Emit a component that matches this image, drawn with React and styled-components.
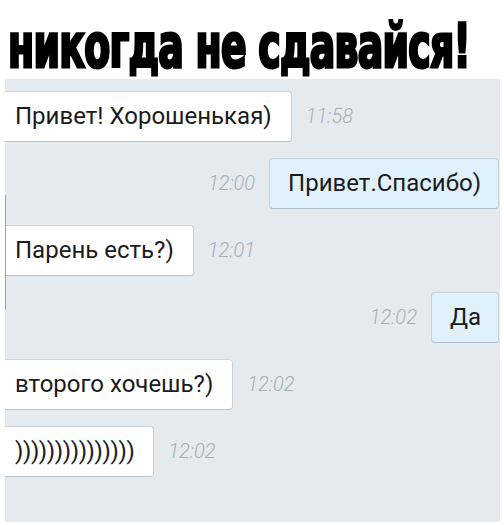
import React from "react";
import styled, { createGlobalStyle } from "styled-components";

const GlobalStyle = createGlobalStyle`
  html, body {
    margin: 0;
    padding: 0;
    background: #ffffff;
  }
  body {
    width: 504px;
    height: 525px;
    overflow: hidden;
  }
`;

const Page = styled.div`
  width: 504px;
  height: 525px;
  display: flex;
  flex-direction: column;
  background: #ffffff;
`;

const Header = styled.div`
  height: 79px;
  display: flex;
  align-items: flex-end;
  padding-left: 8px;
  box-sizing: border-box;
`;

const Title = styled.h1`
  margin: 0 0 3px 0;
  font-family: "DejaVu Sans", sans-serif;
  font-stretch: condensed;
  font-weight: 700;
  font-size: 60px;
  line-height: 60px;
  letter-spacing: -1px;
  color: #000;
  -webkit-text-stroke: 3px #000;
  transform: scaleX(0.7);
  transform-origin: left bottom;
  white-space: nowrap;
`;

const Chat = styled.div`
  position: relative;
  margin: 0 4px 3px 5px;
  flex: 1;
  background: #e4eaee;
  overflow: hidden;
  display: flex;
  flex-direction: column;
  gap: 16px;
  padding-top: 12px;
`;

const ScrollMark = styled.div`
  position: absolute;
  left: 0;
  top: 116px;
  width: 1px;
  height: 115px;
  background: #9aa1a8;
`;

const Row = styled.div`
  display: flex;
  align-items: center;
  gap: 14px;
  justify-content: ${(p) => (p.$out ? "flex-end" : "flex-start")};
  margin: ${(p) => (p.$out ? "0 1px 0 0" : "0 0 0 -6px")};
`;

const Bubble = styled.div`
  height: 51px;
  box-sizing: border-box;
  display: flex;
  align-items: center;
  padding: ${(p) => (p.$out ? "0 17px 2px 18px" : "0 19px 2px 15px")};
  border-radius: 4px;
  border: 1px solid ${(p) => (p.$out ? "#bfd2de" : "#cdd4d9")};
  border-bottom-color: ${(p) => (p.$out ? "#aabfcc" : "#bcc3c9")};
  background: ${(p) => (p.$out ? "#e0f1fb" : "#ffffff")};
  font-family: Roboto, "Liberation Sans", sans-serif;
  font-size: 24px;
  letter-spacing: ${(p) => (p.$tight ? "-0.4px" : "normal")};
  color: #1b1b1b;
  white-space: nowrap;
`;

const Time = styled.span`
  font-family: Roboto, "Liberation Sans", sans-serif;
  font-style: italic;
  font-weight: 300;
  font-size: 20px;
  color: #a7aeb6;
  padding-bottom: 2px;
`;

const messages = [
  { text: "Привет! Хорошенькая)", time: "11:58" },
  { text: "Привет.Спасибо)", time: "12:00", out: true },
  { text: "Парень есть?)", time: "12:01" },
  { text: "Да", time: "12:02", out: true },
  { text: "второго хочешь?)", time: "12:02" },
  { text: ")))))))))))))))", time: "12:02", tight: true },
];

export default function App() {
  return (
    <>
      <GlobalStyle />
      <Page>
        <Header>
          <Title>никогда не сдавайся!</Title>
        </Header>
        <Chat>
          <ScrollMark />
          {messages.map((m, i) =>
            m.out ? (
              <Row key={i} $out>
                <Time>{m.time}</Time>
                <Bubble $out>{m.text}</Bubble>
              </Row>
            ) : (
              <Row key={i}>
                <Bubble $tight={m.tight}>{m.text}</Bubble>
                <Time>{m.time}</Time>
              </Row>
            )
          )}
        </Chat>
      </Page>
    </>
  );
}
